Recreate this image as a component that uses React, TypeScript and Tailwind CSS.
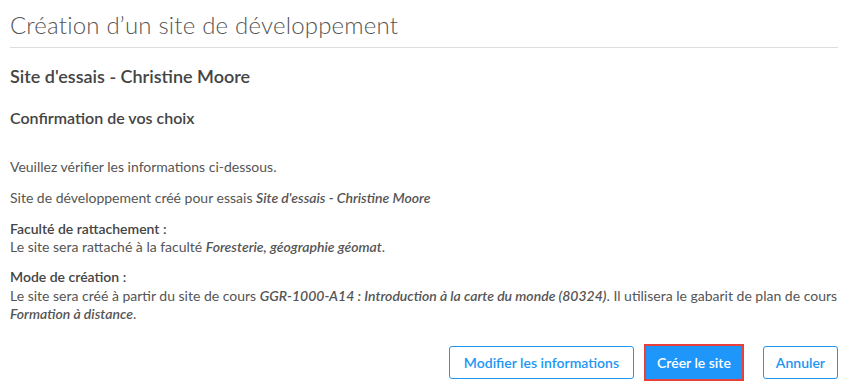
export default function App() {
  return (
    <div
      className="w-[865px] h-[392px] bg-white text-[#444] px-[10px] pt-[9px]"
      style={{ fontFamily: 'Lato, "Open Sans", sans-serif' }}
    >
      <h1 className="text-[24px] font-light text-[#555] leading-[32px] pb-[6px] border-b border-[#dddddd] mr-[17px] tracking-[0.2px]">
        Création d’un site de développement
      </h1>
      <h2 className="mt-[16px] text-[18px] font-semibold leading-[24px] text-[#444]">
        Site d'essais - Christine Moore
      </h2>
      <h3 className="mt-[19px] text-[16px] font-semibold leading-[22px] text-[#444]">
        Confirmation de vos choix
      </h3>

      <div className="mt-[29px] text-[14px] leading-[18px] text-[#555]">
        <p>Veuillez vérifier les informations ci-dessous.</p>
        <p className="mt-[13px]">
          Site de développement créé pour essais <em className="font-semibold">Site d'essais - Christine Moore</em>
        </p>
        <p className="mt-[13px]">
          <span className="font-semibold text-[#444]">Faculté de rattachement :</span>
          <br />
          Le site sera rattaché à la faculté <em className="font-semibold">Foresterie, géographie géomat</em>.
        </p>
        <p className="mt-[12px]">
          <span className="font-semibold text-[#444]">Mode de création :</span>
          <br />
          <span className="inline-block mt-[1px]">
            Le site sera créé à partir du site de cours{' '}
            <em className="font-semibold">GGR-1000-A14 : Introduction à la carte du monde (80324)</em>. Il utilisera le
            gabarit de plan de cours
          </span>
          <br />
          <em className="font-semibold">Formation à distance</em>.
        </p>
      </div>

      <div className="mt-[21px] flex justify-end items-center mr-[17px]">
        <button className="h-[33px] px-[14px] rounded-[3px] border border-[#2196f3] text-[#2196f3] text-[14px] font-semibold bg-white">
          Modifier les informations
        </button>
        <button className="ml-[10px] h-[37px] px-[11px] border-[2px] border-[#e8413b] bg-[#1e96fa] text-white text-[14px] font-semibold">
          Créer le site
        </button>
        <button className="ml-[19px] h-[33px] px-[12px] rounded-[3px] border border-[#2196f3] text-[#2196f3] text-[14px] font-semibold bg-white">
          Annuler
        </button>
      </div>
    </div>
  )
}
